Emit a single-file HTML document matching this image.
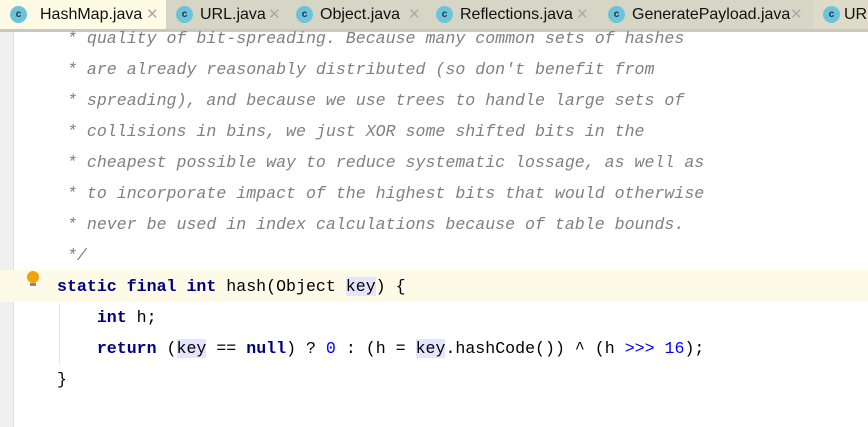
<!DOCTYPE html><html><head><style>
body{margin:0;width:868px;height:427px;overflow:hidden;background:#fff;position:relative;font-family:"Liberation Sans",sans-serif}
.tabs{position:absolute;left:0;top:0;width:868px;height:29px;background:#dcdcd0;border-bottom:3px solid #c8c8c0}
.tab{position:absolute;top:0;height:29px;border-right:1px solid #b8b8b0;font-size:16px;color:#111;line-height:29px;white-space:nowrap;overflow:hidden;background:#d6d6c6}
.tab.act{background:#fdfbe3}
.ic{position:absolute;left:10px;top:6px;width:17px;height:17px;border-radius:50%;background:#6ec3dc;color:#234;font-size:10px;line-height:17px;text-align:center;font-weight:bold}
.tab .t{position:absolute;left:33px}
.x{color:#aaa;position:absolute;font-size:15px}
.gut{position:absolute;left:0;top:32px;width:13px;height:395px;background:#f0f0f0;border-right:1px solid #e0e0e0}
.hl{position:absolute;left:0;top:270px;width:868px;height:32px;background:#fdfae8}
.code{position:absolute;left:57px;top:23px;font-family:"Liberation Mono",monospace;font-size:16.6px;line-height:31px;white-space:pre;color:#000}
.c{color:#808080;font-style:italic}
.k{color:#000080;font-weight:bold}
.n{color:#0000ff}
.v{background:#e4e4ff}
.guide{position:absolute;left:59px;top:303px;width:1px;height:62px;background:#e6e6e6}
.bulb{position:absolute;left:27px;top:271px;width:12px;height:12px;border-radius:50%;background:#f0a30a}
.bulb2{position:absolute;left:30px;top:283px;width:6px;height:3px;background:#888}
</style></head><body>
<div class="tabs">
<div class="tab act" style="left:0;width:166px"><div class="ic">c</div><span class="t" style="left:40px">HashMap.java</span><span class="x" style="left:146px">✕</span></div>
<div class="tab" style="left:166px;width:120px"><div class="ic">c</div><span class="t" style="left:34px">URL.java</span><span class="x" style="left:102px">✕</span></div>
<div class="tab" style="left:286px;width:140px"><div class="ic">c</div><span class="t" style="left:34px">Object.java</span><span class="x" style="left:122px">✕</span></div>
<div class="tab" style="left:426px;width:172px"><div class="ic">c</div><span class="t" style="left:34px">Reflections.java</span><span class="x" style="left:150px">✕</span></div>
<div class="tab" style="left:598px;width:215px"><div class="ic">c</div><span class="t" style="left:34px">GeneratePayload.java</span><span class="x" style="left:192px">✕</span></div>
<div class="tab act" style="left:813px;width:60px;background:#dedcc8"><div class="ic">c</div><span class="t" style="left:31px">URL</span></div>
</div>
<div class="gut"></div>
<div class="hl"></div>
<div class="guide"></div>
<div class="bulb"></div><div class="bulb2"></div>
<div class="code"><span class="c"> * quality of bit-spreading. Because many common sets of hashes
 * are already reasonably distributed (so don't benefit from
 * spreading), and because we use trees to handle large sets of
 * collisions in bins, we just XOR some shifted bits in the
 * cheapest possible way to reduce systematic lossage, as well as
 * to incorporate impact of the highest bits that would otherwise
 * never be used in index calculations because of table bounds.
 */</span>
<span class="k">static final int</span> hash(Object <span class="v">key</span>) {
    <span class="k">int</span> h;
    <span class="k">return</span> (<span class="v">key</span> == <span class="k">null</span>) ? <span class="n">0</span> : (h = <span class="v">key</span>.hashCode()) ^ (h <span class="n">&gt;&gt;&gt;</span> <span class="n">16</span>);
}</div>
</body></html>
